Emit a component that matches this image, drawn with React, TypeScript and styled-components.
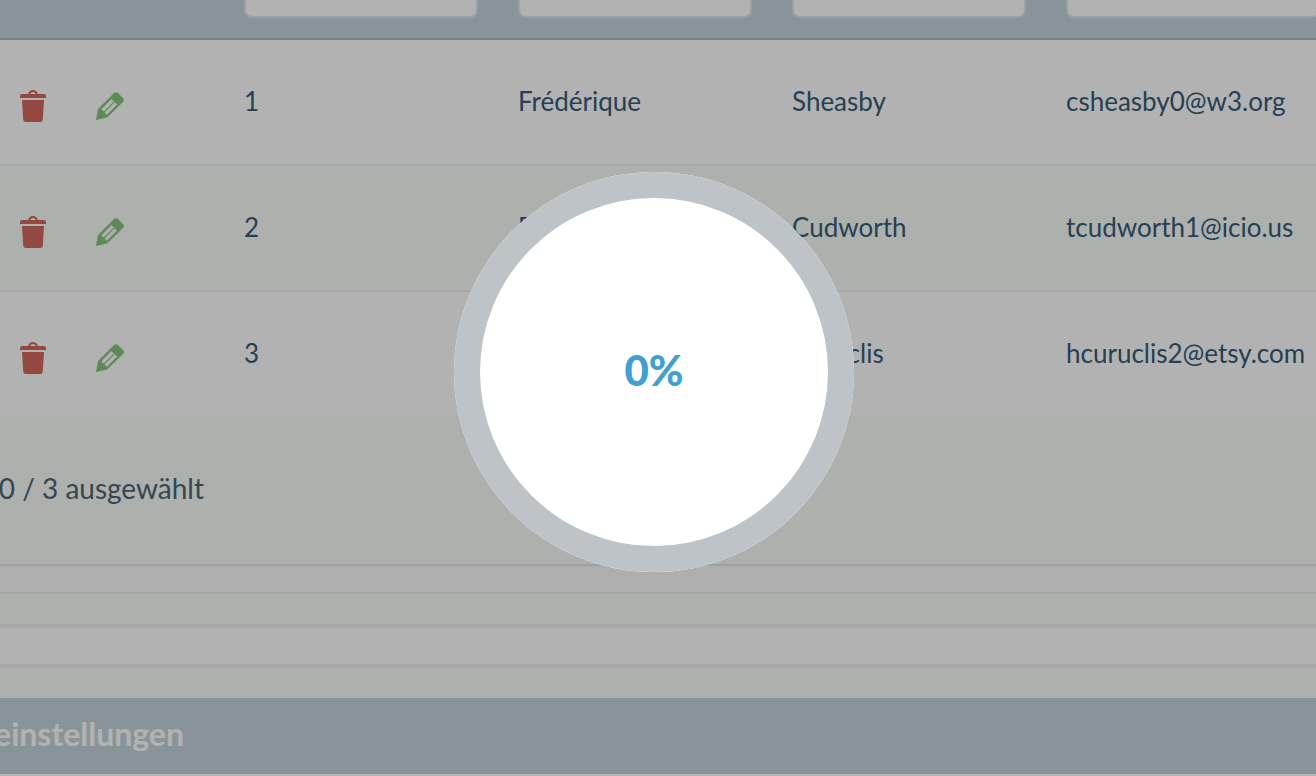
import React from "react";
import styled, { createGlobalStyle } from "styled-components";

const GlobalStyle = createGlobalStyle`
  *, *::before, *::after { box-sizing: border-box; }
  html, body { margin: 0; padding: 0; }
  body {
    background: #ffffff;
    color: #375c78;
    font-family: Lato, "Noto Sans", sans-serif;
    font-size: 26px;
    line-height: 32px;
    overflow: hidden;
  }
`;

const Page = styled.div`
  min-height: 100vh;
  overflow: hidden;
`;

const Table = styled.table`
  width: 100%;
  min-width: 1340px;
  table-layout: fixed;
  border-collapse: separate;
  border-spacing: 0;
`;

const HeadCell = styled.th`
  height: 40px;
  padding: 0 20px 20px;
  background: #c5d5dd;
  border-bottom: 2px solid #adbbc2;
  vertical-align: bottom;
  text-align: left;
`;

const FilterInput = styled.input`
  display: block;
  width: 100%;
  height: 18px;
  padding: 0 16px;
  border: 2px solid #e0e5e9;
  border-top: 0;
  border-radius: 0 0 8px 8px;
  background: #ffffff;
  font: inherit;
  outline: none;
`;

const Row = styled.tr<{ $shaded: boolean; $last: boolean }>`
  background: ${(p) => (p.$shaded ? "#f9fcfa" : "#ffffff")};

  td {
    height: ${(p) => (p.$last ? 124 : 126)}px;
    border-bottom: ${(p) => (p.$last ? "0" : "2px solid #edf2f7")};
  }
`;

const Cell = styled.td`
  padding: 0 20px 2px;
  white-space: nowrap;
  vertical-align: middle;
`;

const Actions = styled.div`
  display: flex;
  align-items: center;
  gap: 50px;
  padding-top: 10px;
`;

const IconButton = styled.button<{ $color: string }>`
  display: flex;
  padding: 0;
  border: 0;
  background: none;
  color: ${(p) => p.$color};
  cursor: pointer;
`;

const Status = styled.div`
  display: flex;
  align-items: center;
  height: 150px;
  padding-bottom: 4px;
  background: #f9fcfa;
  border-bottom: 2px solid #e4e6e6;
  color: #4b6676;
  font-size: 28px;
`;

const ClippedLabel = styled.span<{ $width: number }>`
  display: flex;
  flex: none;
  justify-content: flex-end;
  width: ${(p) => p.$width}px;
  white-space: nowrap;
`;

const Band = styled.div<{ $height: number; $fill: string; $line?: string; $border?: number }>`
  height: ${(p) => p.$height}px;
  background: ${(p) => p.$fill};
  border-bottom: ${(p) => p.$border ?? 0}px solid ${(p) => p.$line ?? "transparent"};
`;

const SectionTitle = styled.h2`
  display: flex;
  align-items: center;
  height: 76px;
  margin: 0;
  padding-bottom: 4px;
  background: #c5d5dd;
  color: #ffffff;
  font-size: 32px;
  font-weight: 700;
`;

const Overlay = styled.div`
  position: fixed;
  inset: 0;
  display: flex;
  align-items: center;
  justify-content: center;
  padding: 0 8px 32px 0;
  background: rgba(0, 0, 0, 0.3);
`;

const ProgressRing = styled.div`
  display: flex;
  align-items: center;
  justify-content: center;
  width: 400px;
  height: 400px;
  padding-bottom: 4px;
  border-radius: 50%;
  background: #ffffff;
  box-shadow: inset 0 0 0 26px #bdc3c7;
  color: #429fd2;
  font-size: 42px;
  font-weight: 900;
  line-height: 48px;
`;

const TrashIcon = () => (
  <svg width="26" height="32" viewBox="0 0 26 32" fill="currentColor" aria-hidden="true">
    <path d="M0 8V6Q0 4 2 4H8.2Q9.2 0 13 0T17.8 4H24Q26 4 26 6V8ZM10.2 4H15.8Q15 2 13 2T10.2 4Z" fillRule="evenodd" />
    <path d="M2 10H24L22.8 29.5Q22.6 32 20.2 32H5.8Q3.4 32 3.2 29.5Z" />
  </svg>
);

const PencilIcon = () => (
  <svg width="28" height="28" viewBox="0 0 28 28" fill="currentColor" aria-hidden="true">
    <path
      fillRule="evenodd"
      d="M0 28L2 17L18 1.1Q20 -0.8 22 1.1L27 6Q29 8 27 10L11.2 25.6ZM5.3 17.2L7.7 19.6L17.9 9.4L15.5 7ZM8.5 20.4L10.9 22.8L21.1 12.6L18.7 10.2Z"
    />
  </svg>
);

const people = [
  { id: 1, first: "Frédérique", last: "Sheasby", email: "csheasby0@w3.org" },
  { id: 2, first: "Réjane", last: "Cudworth", email: "tcudworth1@icio.us" },
  { id: 3, first: "Håkan", last: "Curuclis", email: "hcuruclis2@etsy.com" },
];

const filters = ["ID", "Vorname", "Nachname", "E-Mail"];

export default function App() {
  return (
    <>
      <GlobalStyle />
      <Page>
        <Table>
          <colgroup>
            <col style={{ width: 224 }} />
            <col style={{ width: 274 }} />
            <col style={{ width: 274 }} />
            <col style={{ width: 274 }} />
            <col />
          </colgroup>
          <thead>
            <tr>
              <HeadCell />
              {filters.map((name) => (
                <HeadCell key={name} scope="col">
                  <FilterInput type="text" aria-label={name} />
                </HeadCell>
              ))}
            </tr>
          </thead>
          <tbody>
            {people.map((person, i) => (
              <Row key={person.id} $shaded={i % 2 === 1} $last={i === people.length - 1}>
                <Cell>
                  <Actions>
                    <IconButton type="button" aria-label="Löschen" $color="#d3675f">
                      <TrashIcon />
                    </IconButton>
                    <IconButton type="button" aria-label="Bearbeiten" $color="#85c77c">
                      <PencilIcon />
                    </IconButton>
                  </Actions>
                </Cell>
                <Cell>{person.id}</Cell>
                <Cell>{person.first}</Cell>
                <Cell>{person.last}</Cell>
                <Cell>{person.email}</Cell>
              </Row>
            ))}
          </tbody>
        </Table>
        <Status>
          <ClippedLabel $width={204}>0 / 3 ausgewählt</ClippedLabel>
        </Status>
        <Band $height={28} $fill="#fafafa" $line="#ececec" $border={2} />
        <Band $height={34} $fill="#f9fcfa" $line="#edf2f7" $border={4} />
        <Band $height={40} $fill="#ffffff" $line="#edf2f7" $border={4} />
        <Band $height={30} $fill="#f9fcfa" />
        <SectionTitle>
          <ClippedLabel $width={184}>einstellungen</ClippedLabel>
        </SectionTitle>
      </Page>
      <Overlay>
        <ProgressRing role="progressbar" aria-valuenow={0} aria-valuemin={0} aria-valuemax={100}>
          0%
        </ProgressRing>
      </Overlay>
    </>
  );
}
